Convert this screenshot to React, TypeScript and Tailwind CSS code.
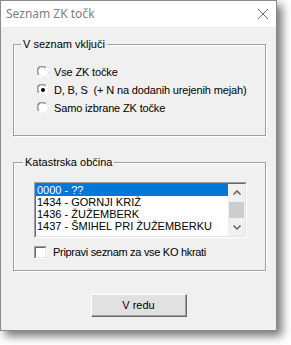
import React from "react";

const F = { fontFamily: '"Liberation Sans", Arial, sans-serif' };

function Radio({ checked }: { checked?: boolean }) {
  return (
    <svg width="12" height="12" viewBox="0 0 12 12" className="shrink-0">
      <circle cx="6" cy="6" r="5.5" fill="#ffffff" />
      <path d="M1.2 9.2 A5.2 5.2 0 0 1 9.2 1.2" fill="none" stroke="#a0a0a0" strokeWidth="1" />
      <path d="M2 8.4 A4.2 4.2 0 0 1 8.4 2" fill="none" stroke="#696969" strokeWidth="1" />
      <path d="M10.8 2.8 A5.2 5.2 0 0 1 2.8 10.8" fill="none" stroke="#ffffff" strokeWidth="1" />
      <path d="M10 3.6 A4.2 4.2 0 0 1 3.6 10" fill="none" stroke="#e3e3e3" strokeWidth="1" />
      {checked && <circle cx="6" cy="6" r="2" fill="#000" />}
    </svg>
  );
}

function Chevron({ up }: { up?: boolean }) {
  return (
    <svg width="8" height="5" viewBox="0 0 8 5">
      <path
        d={up ? "M0.5 4.5 L4 1 L7.5 4.5" : "M0.5 0.5 L4 4 L7.5 0.5"}
        fill="none"
        stroke="#606060"
        strokeWidth="1.5"
      />
    </svg>
  );
}

export default function App() {
  const items = [
    "0000 - ??",
    "1434 - GORNJI KRIŽ",
    "1436 - ŽUŽEMBERK",
    "1437 - ŠMIHEL PRI ŽUŽEMBERKU",
  ];
  return (
    <div className="w-[291px] h-[345px] bg-white" style={F}>
      <div className="w-[277px] h-[331px] border border-[#8a8a8a] bg-[#f0f0f0] shadow-[5px_5px_9px_rgba(0,0,0,0.55)] flex flex-col">
        <div className="h-[26px] bg-white flex items-center justify-between pl-[5px] pr-[8px]">
          <span
            className="text-[12px] text-[#808080]"
            style={{ fontFamily: '"Noto Sans", "Open Sans", sans-serif' }}
          >
            Seznam ZK točk
          </span>
          <svg width="10" height="10" viewBox="0 0 10 10">
            <path d="M0 0 L10 10 M10 0 L0 10" stroke="#6e6e6e" strokeWidth="1" />
          </svg>
        </div>

        <div className="flex flex-col text-[11px] text-black">
          {/* Group 1 */}
          <div className="relative mt-[17px] ml-[12px] w-[253px] h-[92px] border border-[#a0a0a0] shadow-[inset_1px_1px_0_#ffffff,1px_1px_0_#ffffff] pt-[18px] pl-[23px]">
            <span className="absolute left-[7px] top-[-8px] bg-[#f0f0f0] px-[2px] leading-[14px]">
              V seznam vključi
            </span>
            {[
              ["Vse ZK točke", false],
              ["D, B, S  (+ N na dodanih urejenih mejah)", true],
              ["Samo izbrane ZK točke", false],
            ].map(([t, c]) => (
              <div key={t as string} className="h-[18px] flex items-center gap-[5px]">
                <Radio checked={c as boolean} />
                <span className="whitespace-pre tracking-[-0.15px]">{t as string}</span>
              </div>
            ))}
          </div>

          {/* Group 2 */}
          <div className="relative mt-[26px] ml-[12px] w-[253px] h-[109px] border border-[#a0a0a0] shadow-[inset_1px_1px_0_#ffffff,1px_1px_0_#ffffff] pt-[19px] pl-[20px]">
            <span className="absolute left-[9px] top-[-8px] bg-[#f0f0f0] px-[2px] leading-[14px]">
              Katastrska občina
            </span>
            <div className="w-[213px] h-[56px] border-t border-l border-t-[#a0a0a0] border-l-[#a0a0a0] border-b border-r border-b-white border-r-white">
              <div className="w-full h-full border-t border-l border-t-[#696969] border-l-[#696969] border-b border-r border-b-[#e3e3e3] border-r-[#e3e3e3] bg-white flex overflow-hidden">
                <div className="flex-1 flex flex-col overflow-hidden">
                  {items.map((t, i) => (
                    <div
                      key={t}
                      className={
                        "h-[12px] shrink-0 leading-[12px] pl-[1px] whitespace-nowrap " +
                        (i === 0 ? "bg-[#0078d7] text-white" : "text-black")
                      }
                    >
                      {t}
                    </div>
                  ))}
                </div>
                <div className="w-[17px] bg-[#f0f0f0] flex flex-col">
                  <div className="h-[17px] flex items-center justify-center">
                    <Chevron up />
                  </div>
                  <div className="flex-1 px-[1px] py-[1px]">
                    <div className="w-full h-full bg-[#cdcdcd]" />
                  </div>
                  <div className="h-[17px] flex items-center justify-center">
                    <Chevron />
                  </div>
                </div>
              </div>
            </div>
            <div className="mt-[8px] flex items-center gap-[6px] h-[13px]">
              <div className="w-[13px] h-[13px] border-t border-l border-t-[#a0a0a0] border-l-[#a0a0a0] border-b border-r border-b-white border-r-white">
                <div className="w-full h-full bg-white border-t border-l border-t-[#696969] border-l-[#696969] border-b border-r border-b-[#e3e3e3] border-r-[#e3e3e3]" />
              </div>
              <span className="tracking-[-0.3px]">Pripravi seznam za vse KO hkrati</span>
            </div>
          </div>

          {/* Button */}
          <div className="mt-[23px] ml-[90px] w-[96px] h-[23px] border-t border-l border-t-white border-l-white border-b border-r border-b-[#696969] border-r-[#696969]">
            <div className="w-full h-full bg-[#e1e1e1] border-b border-r border-b-[#a0a0a0] border-r-[#a0a0a0] flex items-center justify-center">
              V redu
            </div>
          </div>
        </div>
      </div>
    </div>
  );
}
